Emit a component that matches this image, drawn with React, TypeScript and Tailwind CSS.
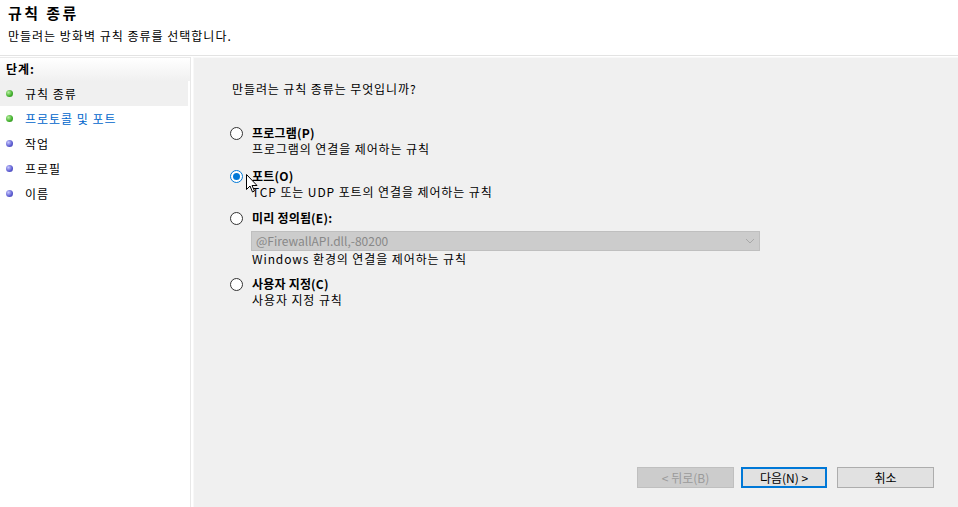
import React from "react";

const font = { fontFamily: '"Noto Sans CJK KR", "Noto Sans", sans-serif' };

type Step = { label: string; done?: boolean; active?: boolean; current?: boolean };

const steps: Step[] = [
  { label: "규칙 종류", done: true, active: true },
  { label: "프로토콜 및 포트", done: true, current: true },
  { label: "작업" },
  { label: "프로필" },
  { label: "이름" },
];

const Bullet = ({ green }: { green?: boolean }) => (
  <span
    className={
      green
        ? "w-[7px] h-[7px] rounded-full bg-[radial-gradient(circle_at_35%_35%,#b8f0a0,#3fae2a_60%,#2a7d1c)]"
        : "w-[7px] h-[7px] rounded-full bg-[radial-gradient(circle_at_35%_35%,#c8c8ff,#5a5ad0_60%,#3a3aa0)]"
    }
  />
);

const Radio = ({ checked }: { checked?: boolean }) => (
  <span
    className={
      checked
        ? "w-[13px] h-[13px] rounded-full border border-[#0078d7] bg-white flex items-center justify-center shrink-0"
        : "w-[13px] h-[13px] rounded-full border border-[#333] bg-white shrink-0"
    }
  >
    {checked && <span className="w-[7px] h-[7px] rounded-full bg-[#0078d7]" />}
  </span>
);

const Option = ({
  label,
  desc,
  checked,
  children,
  className,
}: {
  label: string;
  desc: string;
  checked?: boolean;
  children?: React.ReactNode;
  className?: string;
}) => (
  <div className={className}>
    <div className="flex items-center gap-[9px] pl-[36px] h-[16px]">
      <Radio checked={checked} />
      <span className="text-[12px] font-bold text-black leading-[16px] tracking-[0.2px]">{label}</span>
    </div>
    {children}
    <div className="pl-[58px] text-[12px] leading-[16px] text-black tracking-[0.9px]">{desc}</div>
  </div>
);

export default function App() {
  return (
    <div className="w-[958px] h-[507px] bg-white overflow-hidden relative flex flex-col" style={font}>
      <div className="h-[55px] px-[8px] pt-[2px]">
        <div className="text-[15px] font-bold leading-[22px] text-black tracking-[2.4px]">규칙 종류</div>
        <div className="text-[12px] leading-[18px] mt-[3px] text-black tracking-[1px]">
          만들려는 방화벽 규칙 종류를 선택합니다.
        </div>
      </div>
      <div className="h-[2px] border-t border-[#e3e3e3] bg-white" />
      <div className="flex flex-1">
        <div className="w-[191px] border-r border-[#e8e8e8] flex flex-col">
          <div className="h-[24px] bg-[linear-gradient(#ffffff,#f0f0f0)] border-t border-[#eaeaea] px-[6px] text-[12px] font-bold leading-[22px] text-black tracking-[1px]">
            단계:
          </div>
          <div className="flex flex-col">
            {steps.map((s) => (
              <div
                key={s.label}
                className={
                  s.active
                    ? "h-[25px] flex items-center gap-[12px] pl-[6px] bg-[#f0f0f0] mr-[2px]"
                    : "h-[25px] flex items-center gap-[12px] pl-[6px]"
                }
              >
                <Bullet green={s.done} />
                <span
                  className={
                    s.current
                      ? "text-[12px] text-[#0066cc] tracking-[1px]"
                      : "text-[12px] text-black tracking-[1px]"
                  }
                >
                  {s.label}
                </span>
              </div>
            ))}
          </div>
        </div>
        <div className="w-[2px] bg-white" />
        <div className="flex-1 bg-[#f0f0f0] border-l border-t border-[#f8f8f8] flex flex-col">
          <div className="pt-[22px] flex-1">
            <div className="pl-[38px] text-[12px] leading-[18px] text-black tracking-[0.9px]">
              만들려는 규칙 종류는 무엇입니까?
            </div>
            <Option className="mt-[27px]" label="프로그램(P)" desc="프로그램의 연결을 제어하는 규칙" />
            <Option className="mt-[11px]" label="포트(O)" desc="TCP 또는 UDP 포트의 연결을 제어하는 규칙" checked />
            <Option className="mt-[10px]" label="미리 정의됨(E):" desc="Windows 환경의 연결을 제어하는 규칙">
              <div className="ml-[57px] mt-[5px] w-[509px] h-[20px] bg-[#cccccc] border border-[#bfbfbf] flex items-center justify-between px-[4px]">
                <span className="text-[12px] text-[#888888]">@FirewallAPI.dll,-80200</span>
                <svg width="10" height="6" viewBox="0 0 10 6">
                  <path d="M1 1l4 4 4-4" fill="none" stroke="#a8a8a8" strokeWidth="1" />
                </svg>
              </div>
            </Option>
            <Option className="mt-[9px]" label="사용자 지정(C)" desc="사용자 지정 규칙" />
          </div>
          <div className="flex justify-end gap-[7px] pr-[24px] pb-[19px]">
            <div className="w-[97px] h-[21px] bg-[#cccccc] border border-[#bfbfbf] flex items-center justify-center text-[12px] text-[#9a9a9a]">
              &lt; 뒤로(B)
            </div>
            <div className="w-[86px] h-[21px] bg-[#e1e1e1] border-2 border-[#0078d7] flex items-center justify-center text-[12px] text-black">
              다음(N) &gt;
            </div>
            <div className="w-[97px] h-[21px] bg-[#e1e1e1] border border-[#adadad] flex items-center justify-center text-[12px] text-black ml-[3px]">
              취소
            </div>
          </div>
        </div>
      </div>
      <svg className="absolute left-[246px] top-[174px]" width="12" height="19" viewBox="0 0 12 19">
        <path d="M0.5 0.5v15l3.5-3.5 2.5 6 2-1-2.5-5.5h5z" fill="#fff" stroke="#000" strokeWidth="1" />
      </svg>
    </div>
  );
}
